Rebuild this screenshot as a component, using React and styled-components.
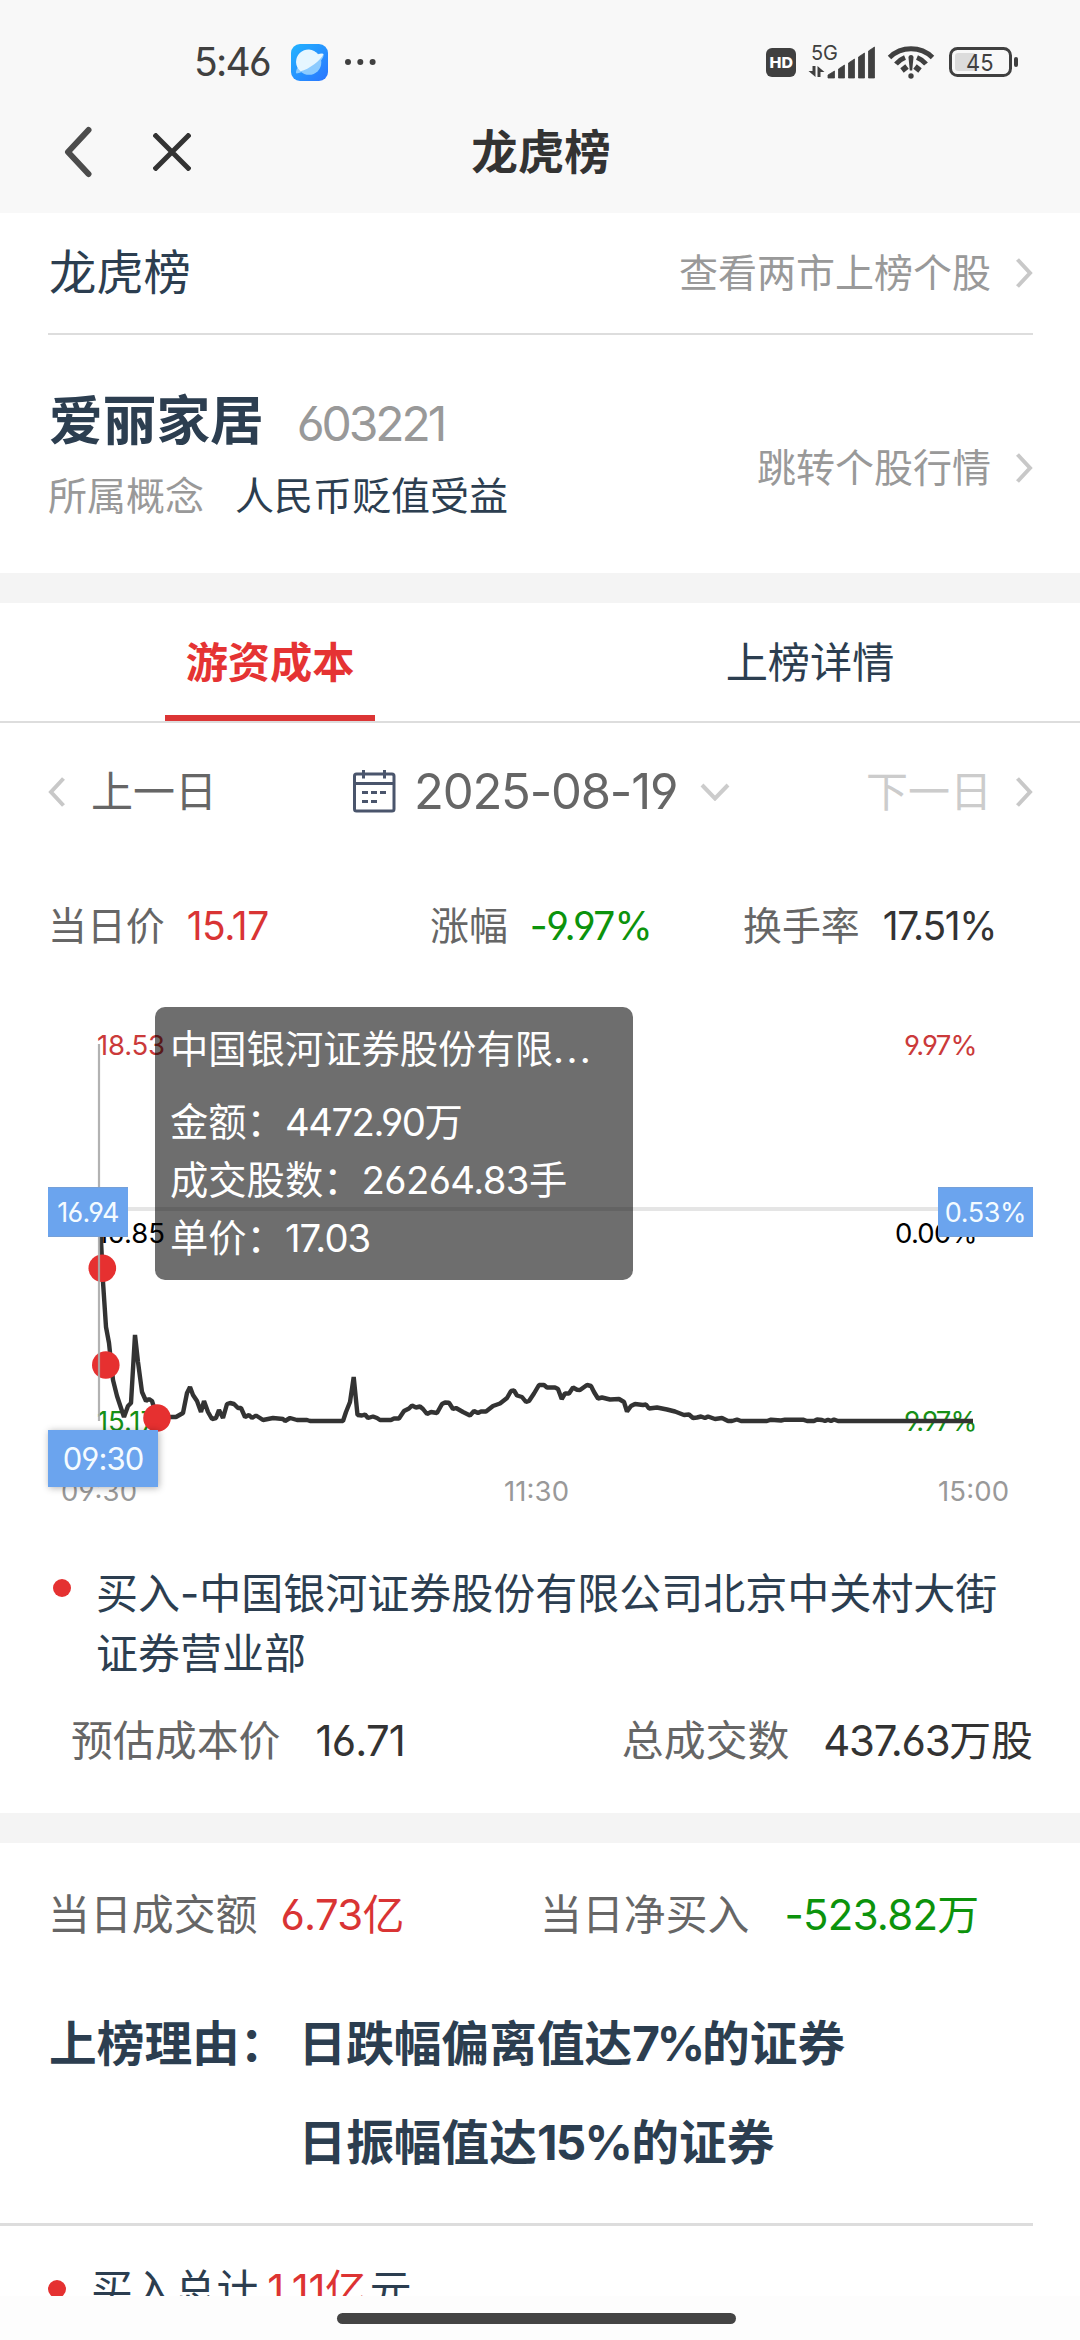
import React from "react";
import styled, { createGlobalStyle } from "styled-components";

const GlobalStyle = createGlobalStyle`
body {
    margin: 0;
    background: #fff;
}
* {
    box-sizing: border-box;
}
`;

const Page = styled.div`
width: 1080px;
height: 2340px;
overflow: hidden;
display: flex;
flex-direction: column;
background: #fdfdfd;
font-family: Inter, "Noto Sans CJK SC", sans-serif;
font-feature-settings: "cv03", "cv04";
line-height: 1.2;
color: #2c3e50;
white-space: nowrap;
`;

const Header = styled.header`
height: 213px;
flex: none;
background: #f8f8f8;
`;

const StatusBar = styled.div`
display: flex;
align-items: center;
height: 84px;
padding: 40px 62px 0 194px;
color: #404040;
`;

const Clock = styled.span`
font-size: 39px;
letter-spacing: -1.7px;
margin-right: 21px;
`;

const StatusIcons = styled.div`
display: flex;
align-items: center;
margin-left: auto;
`;

const NavBar = styled.div`
display: grid;
grid-template-columns: 91px 258px 260px 1fr;
align-items: center;
height: 129px;
padding: 6px 62px 0;
`;

const NavTitle = styled.h1`
margin: 0;
padding-top: 2px;
font-size: 46.5px;
font-weight: 600;
color: #333;
text-align: center;
`;

const NavButton = styled.button`
display: flex;
padding: 0;
border: 0;
background: none;
`;

const Content = styled.main`
height: 2083px;
flex: none;
overflow: hidden;
background: #fff;
`;

const LinkRow = styled.div`
display: flex;
align-items: center;
height: 122px;
margin: 0 47px 0 48px;
border-bottom: 2px solid #ddd;
`;

const RowTitle = styled.span`
font-size: 47.3px;
padding-left: 1px;
`;

const MoreLink = styled.a`
display: flex;
align-items: center;
gap: 25px;
margin-left: auto;
font-size: 39px;
color: #999;
`;

const Stock = styled.section`
display: flex;
align-items: center;
height: 238px;
padding: 28px 47px 0 48px;
`;

const StockInfo = styled.div`
display: flex;
flex-direction: column;
margin-top: -20px;
`;

const StockLine = styled.div`
display: flex;
align-items: center;
height: ${p => p.$height}px;
`;

const StockName = styled.strong`
font-size: 53.7px;
font-weight: 700;
padding: 2px 0 0 1px;
`;

const StockCode = styled.span`
font-size: 48px;
letter-spacing: -3.1px;
color: #999;
margin: 7px 0 0 33px;
`;

const Concept = styled.span`
font-size: 39px;
color: ${p => p.$muted ? "#999" : "#2c3e50"};
margin-right: 31px;
`;

const Divider = styled.div`
height: 30px;
background: #f4f4f4;
`;

const Tabs = styled.nav`
display: grid;
grid-template-columns: 1fr 1fr;
justify-items: center;
height: 120px;
border-bottom: 2px solid #ddd;
`;

const Tab = styled.a`
width: 210px;
height: 118px;
line-height: 119px;
font-size: 42.2px;
text-align: center;
font-weight: ${p => p.$active ? 700 : 400};
color: ${p => p.$active ? "#e53333" : "#2c3e50"};
box-shadow: ${p => p.$active ? "inset 0 -6px 0 #dc3535" : "none"};
`;

const DateBar = styled.div`
display: grid;
grid-template-columns: 305px 513px 1fr;
align-items: center;
height: 138px;
padding: 0 47px 0 48px;
`;

const DayLink = styled.a`
display: flex;
align-items: center;
gap: ${p => p.$gap}px;
font-size: 42px;
color: ${p => p.$disabled ? "#ccc" : "#666"};
`;

const DatePicker = styled.div`
display: flex;
align-items: center;
color: #666;
`;

const DateText = styled.span`
font-size: 49px;
letter-spacing: -1.2px;
margin: 0 23px 0 18px;
`;

const Stats = styled.div`
display: grid;
grid-template-columns: ${p => p.$columns};
align-items: center;
height: ${p => p.$height}px;
padding-left: ${p => p.$indent || 48}px;
padding-right: 47px;
font-size: ${p => p.$size}px;
`;

const Stat = styled.div`
display: flex;
align-items: center;
justify-content: ${p => p.$end ? "flex-end" : "flex-start"};
`;

const StatLabel = styled.span`
color: #666;
`;

const StatValue = styled.span`
margin-left: ${p => p.$gap}px;
letter-spacing: ${p => p.$spacing}px;
color: ${p => p.$color || "#333"};
`;

const Unit = styled.span`
letter-spacing: 0;
`;

const ChartBox = styled.section`
position: relative;
height: 549px;
`;

const ChartSvg = styled.svg`
display: block;
font-size: 27.5px;
`;

const Badge = styled.div`
position: absolute;
top: 196px;
left: ${p => p.$left}px;
width: ${p => p.$width}px;
height: 50px;
line-height: 50px;
background: #6ba4ee;
border: 1px solid #75a0d8;
border-width: 1px 0;
color: #f4fbff;
font-size: 27px;
letter-spacing: ${p => p.$spacing}px;
text-align: center;
`;

const TimeBadge = styled(Badge)`
top: 439px;
height: 57px;
line-height: 58px;
border: 0;
font-size: 31px;
box-shadow: 1px 1px 7px rgba(0, 0, 0, 0.3);
`;

const Tooltip = styled.div`
position: absolute;
top: 16px;
left: 155px;
width: 478px;
height: 273px;
padding: 13px 15px;
border-radius: 10px;
background: rgba(0, 0, 0, 0.57);
color: #fff;
font-size: 38.3px;
line-height: 58px;
`;

const TooltipTitle = styled.div`
margin-bottom: 15px;
`;

const TooltipValue = styled.span`
letter-spacing: ${p => p.$spacing}px;
`;

const Broker = styled.section`
height: 273px;
padding-top: 24px;
`;

const BrokerName = styled.div`
display: flex;
padding: 0 47px 0 53px;
font-size: 42px;
line-height: 60px;
`;

const Dot = styled.i`
flex: none;
width: 18px;
height: 18px;
margin: ${p => p.$top}px 25px 0 0;
border-radius: 50%;
background: #e53131;
`;

const Reason = styled.section`
display: flex;
height: 238px;
margin-right: 47px;
padding: 7px 0 0 49px;
font-size: 47.7px;
font-weight: 700;
line-height: 99px;
border-bottom: 3px solid #ddd;
`;

const ReasonList = styled.div`
padding-left: 11px;
`;

const Percent = styled.span`
letter-spacing: ${p => p.$spacing}px;
`;

const BuyTotal = styled.div`
display: flex;
padding: 44px 0 0 48px;
font-size: 41.8px;
line-height: 40px;
`;

const BuyAmount = styled.span`
margin: 0 3px 0 9px;
letter-spacing: -0.4px;
color: #dd3333;
`;

const HomeBar = styled.footer`
display: flex;
justify-content: center;
padding-top: 17px;
`;

const HomePill = styled.div`
width: 399px;
height: 11px;
margin-right: 7px;
border-radius: 6px;
background: #444;
`;

// minute prices, in page pixels
const priceLine = [
  [99, 1207], [101, 1240], [103, 1282], [106, 1327], [109, 1343], [111, 1362], [113, 1380], [117, 1396], [124, 1417],
  [128, 1406], [131, 1403], [135, 1335], [138, 1362], [142, 1392], [146, 1401], [149, 1399], [152, 1401],
  [157, 1417], [163, 1417], [176, 1417], [183, 1413], [187, 1393], [190, 1387], [193, 1395], [197, 1401],
  [201, 1412], [204, 1401], [208, 1412], [212, 1419], [216, 1418], [219, 1410], [223, 1418], [227, 1404],
  [230, 1403], [234, 1404], [238, 1408], [241, 1408], [245, 1417], [249, 1415], [252, 1418], [256, 1415.5],
  [260, 1418], [263, 1420], [273, 1418], [283, 1419], [285, 1421], [290, 1418], [297, 1420], [307, 1420],
  [310, 1421], [343, 1421], [346, 1412], [350, 1402], [353.7, 1377], [357.5, 1415], [362, 1415.5], [365, 1414.5],
  [368, 1418], [373, 1416.5], [377, 1418], [380, 1420], [391, 1420], [394, 1418.5], [399, 1418.5], [404, 1411],
  [409, 1408.5], [412, 1405.5], [416, 1407.5], [420, 1406.5], [423, 1409], [427, 1414], [431, 1412], [437, 1413],
  [442, 1404], [445, 1402.5], [449, 1402.7], [453, 1409], [456, 1408], [463, 1412], [470, 1415.5], [474, 1411],
  [478, 1413], [481, 1411.5], [486, 1411.5], [493, 1406], [500, 1403.5], [507, 1398], [511, 1391], [514, 1390.5],
  [517, 1395.5], [522, 1397], [526, 1402], [529, 1401], [534, 1393.5], [539, 1385], [544, 1385], [547, 1387.5],
  [555, 1387.5], [558, 1389], [561.7, 1399], [565, 1393.5], [569, 1393.5], [573, 1387.5], [577, 1389.7], [580, 1390],
  [587, 1385], [591, 1386], [594, 1392], [598, 1398.5], [602, 1397.5], [610, 1399.5], [619, 1399], [624, 1402],
  [627, 1411.5], [631, 1406], [635, 1404], [643, 1405], [646, 1404.5], [649, 1408.5], [657, 1407.5], [667, 1409.5],
  [675, 1411.5], [684, 1415], [689, 1414.5], [693, 1418], [697, 1417.5], [701, 1416.5], [705, 1418], [708, 1416.5],
  [715, 1419], [722, 1418], [728, 1421], [732, 1421], [737, 1419.5], [741, 1421], [767, 1421], [771, 1419.7],
  [781, 1420.5], [785, 1419.7], [803, 1419.7], [807, 1421], [814, 1421], [817, 1419.5], [822, 1420], [825, 1421],
  [828, 1419.7], [831, 1421], [834, 1419.5], [838, 1421], [973, 1421]
];

const trades = [[102.3, 1268.3], [105.8, 1365], [157, 1418]];

const axisTexts = [
  { text: "18.53", x: 97, y: 1055, width: 68, color: "#cb3a3a" },
  { text: "9.97%", x: 904, y: 1055, width: 73.5, color: "#cb3a3a" },
  { text: "16.85", x: 97, y: 1243, width: 68, color: "#000" },
  { text: "0.00%", x: 895, y: 1243, width: 82.5, color: "#000" },
  { text: "15.17", x: 97, y: 1431, width: 59, color: "#169016" },
  { text: "9.97%", x: 904, y: 1431, width: 73.5, color: "#169016" },
  { text: "09:30", x: 61, y: 1501, width: 76, color: "#999" },
  { text: "11:30", x: 504, y: 1501, width: 65, color: "#999" },
  { text: "15:00", x: 938, y: 1501, width: 71, color: "#999" }
];

function Arrow({ flip }) {
    return (
        <svg width="17" height="30" viewBox="0 0 17 30" fill="none" stroke="#c8c8c8" strokeWidth="4">
            <path d={flip ? "M15.5 1.5 3 15l12.5 13.5" : "M1.5 1.5 14 15 1.5 28.5"} />
        </svg>
    )
}

function BrowserIcon() {
    return (
        <svg width="37" height="37" viewBox="0 0 37 37">
            <defs>
                <linearGradient id="sky" x1="0" y1="0" x2="1" y2="1">
                    <stop offset="0" stopColor="#22b4ff" />
                    <stop offset="1" stopColor="#2a74ff" />
                </linearGradient>
            </defs>
            <rect width="37" height="37" rx="9" fill="url(#sky)" />
            <circle cx="18" cy="18.5" r="12.3" fill="#8ccbff" />
            <path d="M6 24.500C5 27 4.500 29 5.500 29.500 11 29 24 22.500 29 17.500c3-3 4-6 3.500-7.500-2-.8-4-.5-6 0z" fill="#8ccbff" />
            <path d="M9.500 27.300A12.300 12.300 0 1 1 27 10.200c2-.6 4-.7 5.500-.2C30 16 18 25.500 9.500 27.300z" fill="#e6f6ff" />
        </svg>
    )
}

function MoreDots() {
    return (
        <svg width="48" height="8" viewBox="0 0 48 8" fill="#404040">
            <circle cx="20" cy="4" r="3" />
            <circle cx="32.3" cy="4" r="3" />
            <circle cx="44.6" cy="4" r="3" />
        </svg>
    )
}

function SignalIcons() {
    return (
        <svg width="253" height="48" viewBox="765 38 253 48" fill="#404040">
            <rect x="766" y="48" width="30" height="29" rx="6" />
            <text x="769.5" y="68" fontSize="15" fontWeight="800" fill="#fff" textLength="23.5" lengthAdjust="spacingAndGlyphs">HD</text>
            <text x="811" y="60" fontSize="20.5" textLength="27" lengthAdjust="spacingAndGlyphs">5G</text>
            <path d="M815.500 66v11l-7-6h4v-5zM817.500 77V66l7 6h-4v5z" />
            <path d="M828 78v-3l6.500-4v7zM838.500 78V69l6-4v13zM848.500 78V63l6-4v19zM858.500 78V57l6-4v25zM868.500 78V51l6-4v31z" stroke="#404040" strokeWidth=".8" strokeLinejoin="round" />
            <g fill="none" stroke="#404040">
                <path d="M889.500 57.500a31 31 0 0 1 43 0" strokeWidth="5" />
                <path d="M896 64a23 23 0 0 1 9-6.500M926 64a23 23 0 0 0-9-6.500" strokeWidth="5" />
                <path d="M902 70.500l5-4M920 70.500l-5-4" strokeWidth="5.500" />
            </g>
            <path d="M908.500 57.500a2.500 2.500 0 0 1 5 0l-1.300 13h-2.400z" />
            <circle cx="911" cy="76" r="2.7" />
            <rect x="955" y="53" width="21" height="18" rx="3" fill="#dcdcdc" />
            <rect x="950.5" y="48.5" width="60" height="27" rx="7" fill="none" stroke="#404040" strokeWidth="3" />
            <rect x="1014" y="57" width="4" height="10" rx="2" />
            <text x="966" y="70.5" fontSize="23.5" textLength="27.5" lengthAdjust="spacingAndGlyphs">45</text>
        </svg>
    )
}

function Chart() {
    return (
        <ChartBox>
            <ChartSvg width="1080" height="549" viewBox="0 991 1080 549">
                <path d="M48 1209H1033" stroke="#e5e5e5" strokeWidth="4" />
                {axisTexts.map((t, i) => (
                    <text key={i} x={t.x} y={t.y} fill={t.color} textLength={t.width}>{t.text}</text>
                ))}
                <polyline points={priceLine.join(" ")} fill="none" stroke="#333" strokeWidth="4.4" strokeLinejoin="bevel" />
                {trades.map(([x, y]) => <circle key={x} cx={x} cy={y} r="13.8" fill="#e63030" />)}
                <path d="M99 1044V1421" stroke="#aaa" strokeOpacity=".9" strokeWidth="2.2" />
            </ChartSvg>
            <Badge $left={48} $width={80} $spacing={-0.7}>16.94</Badge>
            <Badge $left={938} $width={95} $spacing={-0.4}>0.53%</Badge>
            <TimeBadge $left={48} $width={110} $spacing={-0.9}>09:30</TimeBadge>
            <Tooltip>
                <TooltipTitle>中国银河证券股份有限<TooltipValue $spacing={2.4}>...</TooltipValue></TooltipTitle>
                <div>金额：<TooltipValue $spacing={-1.5}>4472.90</TooltipValue>万</div>
                <div>成交股数：<TooltipValue $spacing={-0.6}>26264.83</TooltipValue>手</div>
                <div>单价：<TooltipValue $spacing={-1}>17.03</TooltipValue></div>
            </Tooltip>
        </ChartBox>
    )
}

export default function App() {
    return (
        <Page>
            <GlobalStyle />
            <Header>
                <StatusBar>
                    <Clock>5:46</Clock>
                    <BrowserIcon />
                    <MoreDots />
                    <StatusIcons><SignalIcons /></StatusIcons>
                </StatusBar>
                <NavBar>
                    <NavButton aria-label="back">
                        <svg width="32" height="52" viewBox="0 0 32 52" fill="none" stroke="#4c4c4c" strokeWidth="6" strokeLinecap="round" strokeLinejoin="round">
                            <path d="M26.5 4 6 26l20.5 22" />
                        </svg>
                    </NavButton>
                    <NavButton aria-label="close">
                        <svg width="38" height="38" viewBox="0 0 38 38" fill="none" stroke="#333" strokeWidth="5">
                            <path d="M1 1l36 36M37 1 1 37" />
                        </svg>
                    </NavButton>
                    <NavTitle>龙虎榜</NavTitle>
                </NavBar>
            </Header>
            <Content>
                <LinkRow>
                    <RowTitle>龙虎榜</RowTitle>
                    <MoreLink>查看两市上榜个股<Arrow /></MoreLink>
                </LinkRow>
                <Stock>
                    <StockInfo>
                        <StockLine $height={76}>
                            <StockName>爱丽家居</StockName>
                            <StockCode>603221</StockCode>
                        </StockLine>
                        <StockLine $height={76}>
                            <Concept $muted>所属概念</Concept>
                            <Concept>人民币贬值受益</Concept>
                        </StockLine>
                    </StockInfo>
                    <MoreLink>跳转个股行情<Arrow /></MoreLink>
                </Stock>
                <Divider />
                <Tabs>
                    <Tab $active>游资成本</Tab>
                    <Tab>上榜详情</Tab>
                </Tabs>
                <DateBar>
                    <DayLink $gap={26}><Arrow flip />上一日</DayLink>
                    <DatePicker>
                        <svg width="43" height="43" viewBox="0 0 43 43" fill="none" stroke="#4a556c" strokeWidth="3">
                            <rect x="1.5" y="4" width="39.5" height="37" rx="2" />
                            <path d="M1 13.500h41M10.500 0v8.500M31.500 0v8.500M9 22.500h6M18 22.500h6M27 22.500h6M9 31.500h6M18 31.500h6" />
                        </svg>
                        <DateText>2025-08-19</DateText>
                        <svg width="30" height="18" viewBox="0 0 30 18" fill="none" stroke="#ccc" strokeWidth="4">
                            <path d="M2 2l13 13.500L28 2" />
                        </svg>
                    </DatePicker>
                    <DayLink $gap={24} $disabled>下一日<Arrow /></DayLink>
                </DateBar>
                <Stats $columns="382px 313px 1fr" $height={130} $size={38.9}>
                    <Stat>
                        <StatLabel>当日价</StatLabel>
                        <StatValue $gap={22} $spacing={-0.4} $color="#d93434">15.17</StatValue>
                    </Stat>
                    <Stat>
                        <StatLabel>涨幅</StatLabel>
                        <StatValue $gap={22} $spacing={-0.7} $color="#0c930c">-9.97%</StatValue>
                    </Stat>
                    <Stat>
                        <StatLabel>换手率</StatLabel>
                        <StatValue $gap={23} $spacing={-1.3}>17.51%</StatValue>
                    </Stat>
                </Stats>
                <Chart />
                <Broker>
                    <BrokerName>
                        <Dot $top={15} />
                        <div>买入-中国银河证券股份有限公司北京中关村大街<br />证券营业部</div>
                    </BrokerName>
                    <Stats $columns="1fr 1fr" $height={114} $size={41.9} $indent={71}>
                        <Stat>
                            <StatLabel>预估成本价</StatLabel>
                            <StatValue $gap={35} $spacing={-0.8}>16.71</StatValue>
                        </Stat>
                        <Stat $end>
                            <StatLabel>总成交数</StatLabel>
                            <StatValue $gap={34} $spacing={-1.3}>437.63<Unit>万股</Unit></StatValue>
                        </Stat>
                    </Stats>
                </Broker>
                <Divider />
                <Stats $columns="492px 1fr" $height={145} $size={41.9}>
                    <Stat>
                        <StatLabel>当日成交额</StatLabel>
                        <StatValue $gap={23} $spacing={-0.7} $color="#d93434">6.73<Unit>亿</Unit></StatValue>
                    </Stat>
                    <Stat>
                        <StatLabel>当日净买入</StatLabel>
                        <StatValue $gap={35} $spacing={-0.7} $color="#0c930c">-523.82<Unit>万</Unit></StatValue>
                    </Stat>
                </Stats>
                <Reason>
                    <span>上榜理由：</span>
                    <ReasonList>
                        <div>日跌幅偏离值达<Percent $spacing={-3.2}>7%</Percent>的证券</div>
                        <div>日振幅值达<Percent $spacing={-1.7}>15%</Percent>的证券</div>
                    </ReasonList>
                </Reason>
                <BuyTotal>
                    <Dot $top={10} />
                    买入总计<BuyAmount>1.11<Unit>亿</Unit></BuyAmount>元
                </BuyTotal>
            </Content>
            <HomeBar>
                <HomePill />
            </HomeBar>
        </Page>
    )
}
